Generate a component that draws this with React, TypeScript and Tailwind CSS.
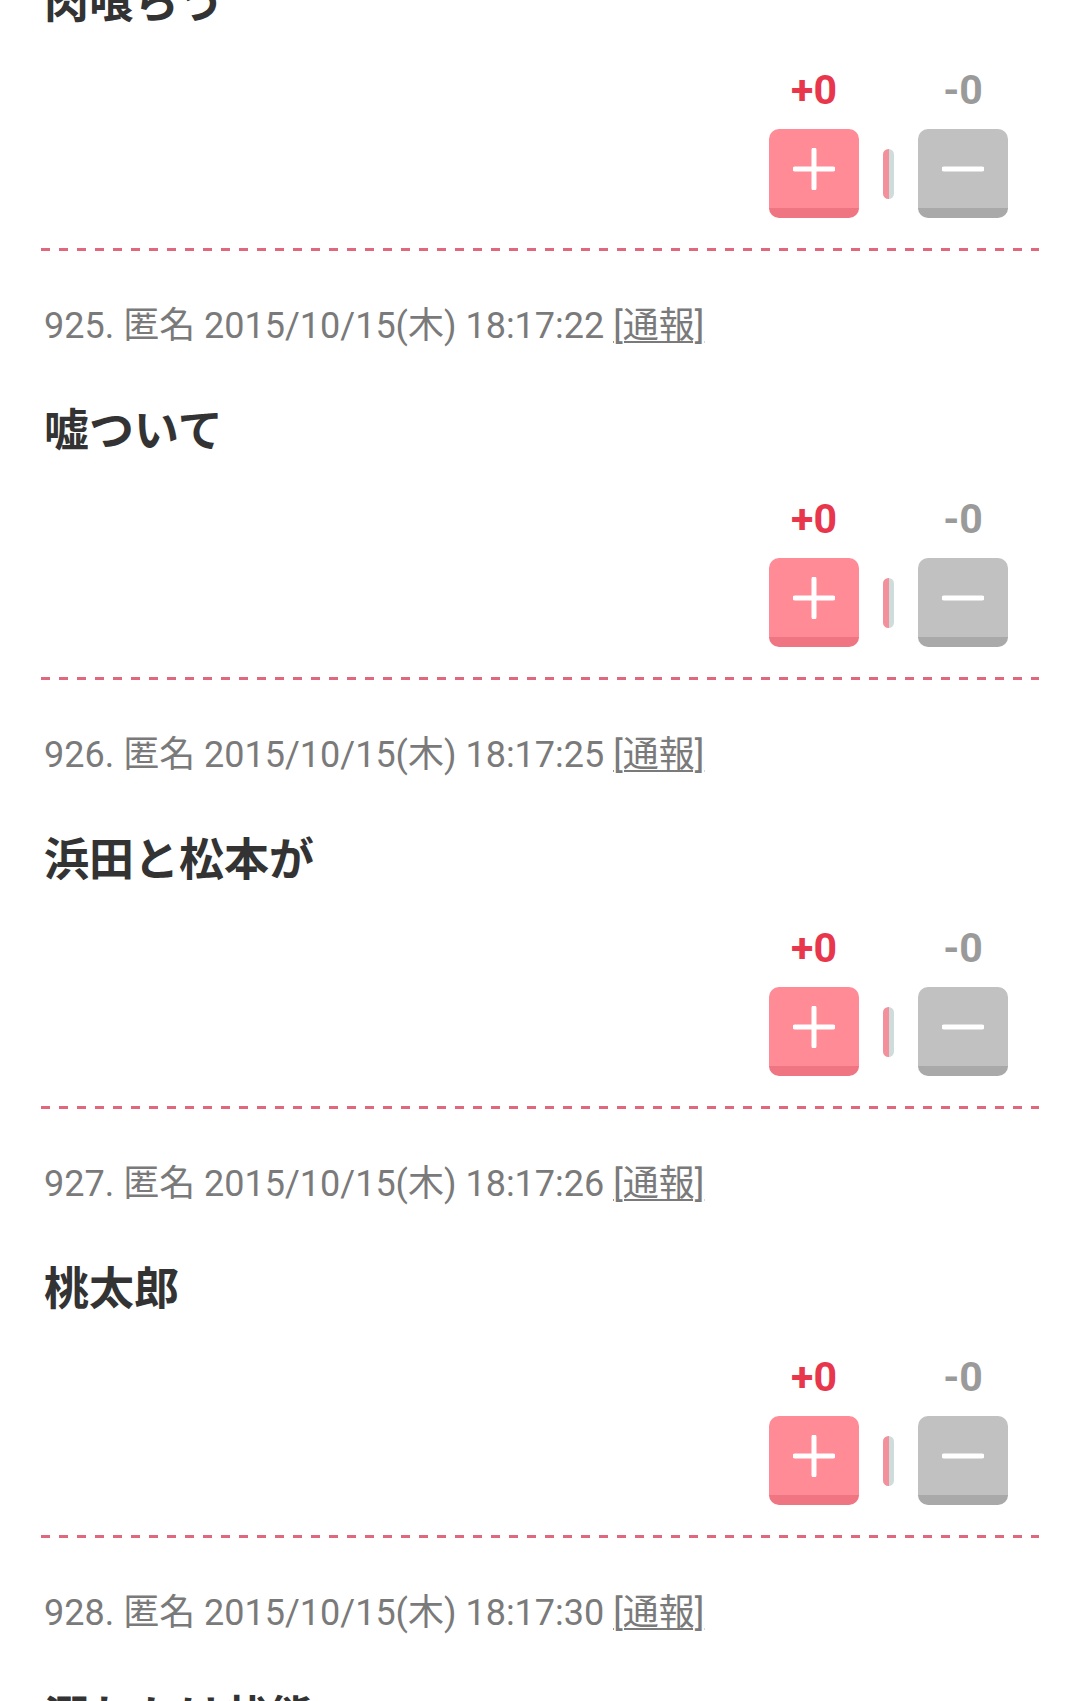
import React from "react";

type Post = {
  no: number;
  time: string;
  body: string;
};

const posts: Post[] = [
  { no: 924, time: "18:17:18", body: "肉喰らう" },
  { no: 925, time: "18:17:22", body: "嘘ついて" },
  { no: 926, time: "18:17:25", body: "浜田と松本が" },
  { no: 927, time: "18:17:26", body: "桃太郎" },
  { no: 928, time: "18:17:30", body: "溺れかけ状態" },
];

function PlusIcon() {
  return (
    <svg width="42" height="42" viewBox="0 0 42 42" fill="none">
      <path d="M21 2v38M2 21h38" stroke="white" strokeWidth="5" strokeLinecap="round" />
    </svg>
  );
}

function MinusIcon() {
  return (
    <svg width="42" height="42" viewBox="0 0 42 42" fill="none">
      <path d="M2 21h38" stroke="white" strokeWidth="5" strokeLinecap="round" />
    </svg>
  );
}

function Votes() {
  return (
    <div className="flex justify-end mr-[31px]">
      <div className="flex flex-col">
        <div className="flex h-[40px] items-center font-['Roboto','Liberation_Sans',sans-serif] font-bold text-[41px] leading-[40px]">
          <span className="w-[90px] text-center text-[#e8364c]">+0</span>
          <span className="w-[59px]" />
          <span className="w-[90px] text-center text-[#9a9a9a]">-0</span>
        </div>
        <div className="mt-[19px] flex items-center">
          <button className="flex h-[89px] w-[90px] items-center justify-center rounded-[10px] border-b-[10px] border-[#ef7583] bg-[#ff8b97]">
            <PlusIcon />
          </button>
          <div className="mx-[24px] flex h-[50px] w-[11px] overflow-hidden rounded-full">
            <div className="w-1/2 bg-[#f3909c]" />
            <div className="w-1/2 bg-[#cfdcdc]" />
          </div>
          <button className="flex h-[89px] w-[90px] items-center justify-center rounded-[10px] border-b-[10px] border-[#a9a9a9] bg-[#c1c1c1]">
            <MinusIcon />
          </button>
        </div>
      </div>
    </div>
  );
}

function PostItem({ post }: { post: Post }) {
  return (
    <div>
      <div className="pt-[50px] pb-[30px]">
        <p className="h-[50px] whitespace-nowrap pl-[3px] font-['Roboto','Noto_Sans_CJK_JP',sans-serif] text-[36px] leading-[50px] text-[#7a7a7a]">
          {post.no}. 匿名 2015/10/15(木) {post.time}{" "}
          <a className="underline decoration-[2px] underline-offset-[3px]">[通報]</a>
        </p>
        <p className="mt-[47px] h-[60px] pl-[3px] font-['Noto_Sans_CJK_JP',sans-serif] text-[45px] font-bold leading-[60px] text-[#333333]">
          {post.body}
        </p>
        <div className="mt-[41px]">
          <Votes />
        </div>
      </div>
      <div className="h-[3px] bg-[repeating-linear-gradient(90deg,#e0687d_0px,#e0687d_9px,transparent_9px,transparent_18px)]" />
    </div>
  );
}

export default function App() {
  return (
    <div className="h-[1701px] overflow-hidden bg-white">
      <div className="mt-[-178px] px-[41px]">
        {posts.map((p) => (
          <PostItem key={p.no} post={p} />
        ))}
      </div>
    </div>
  );
}
